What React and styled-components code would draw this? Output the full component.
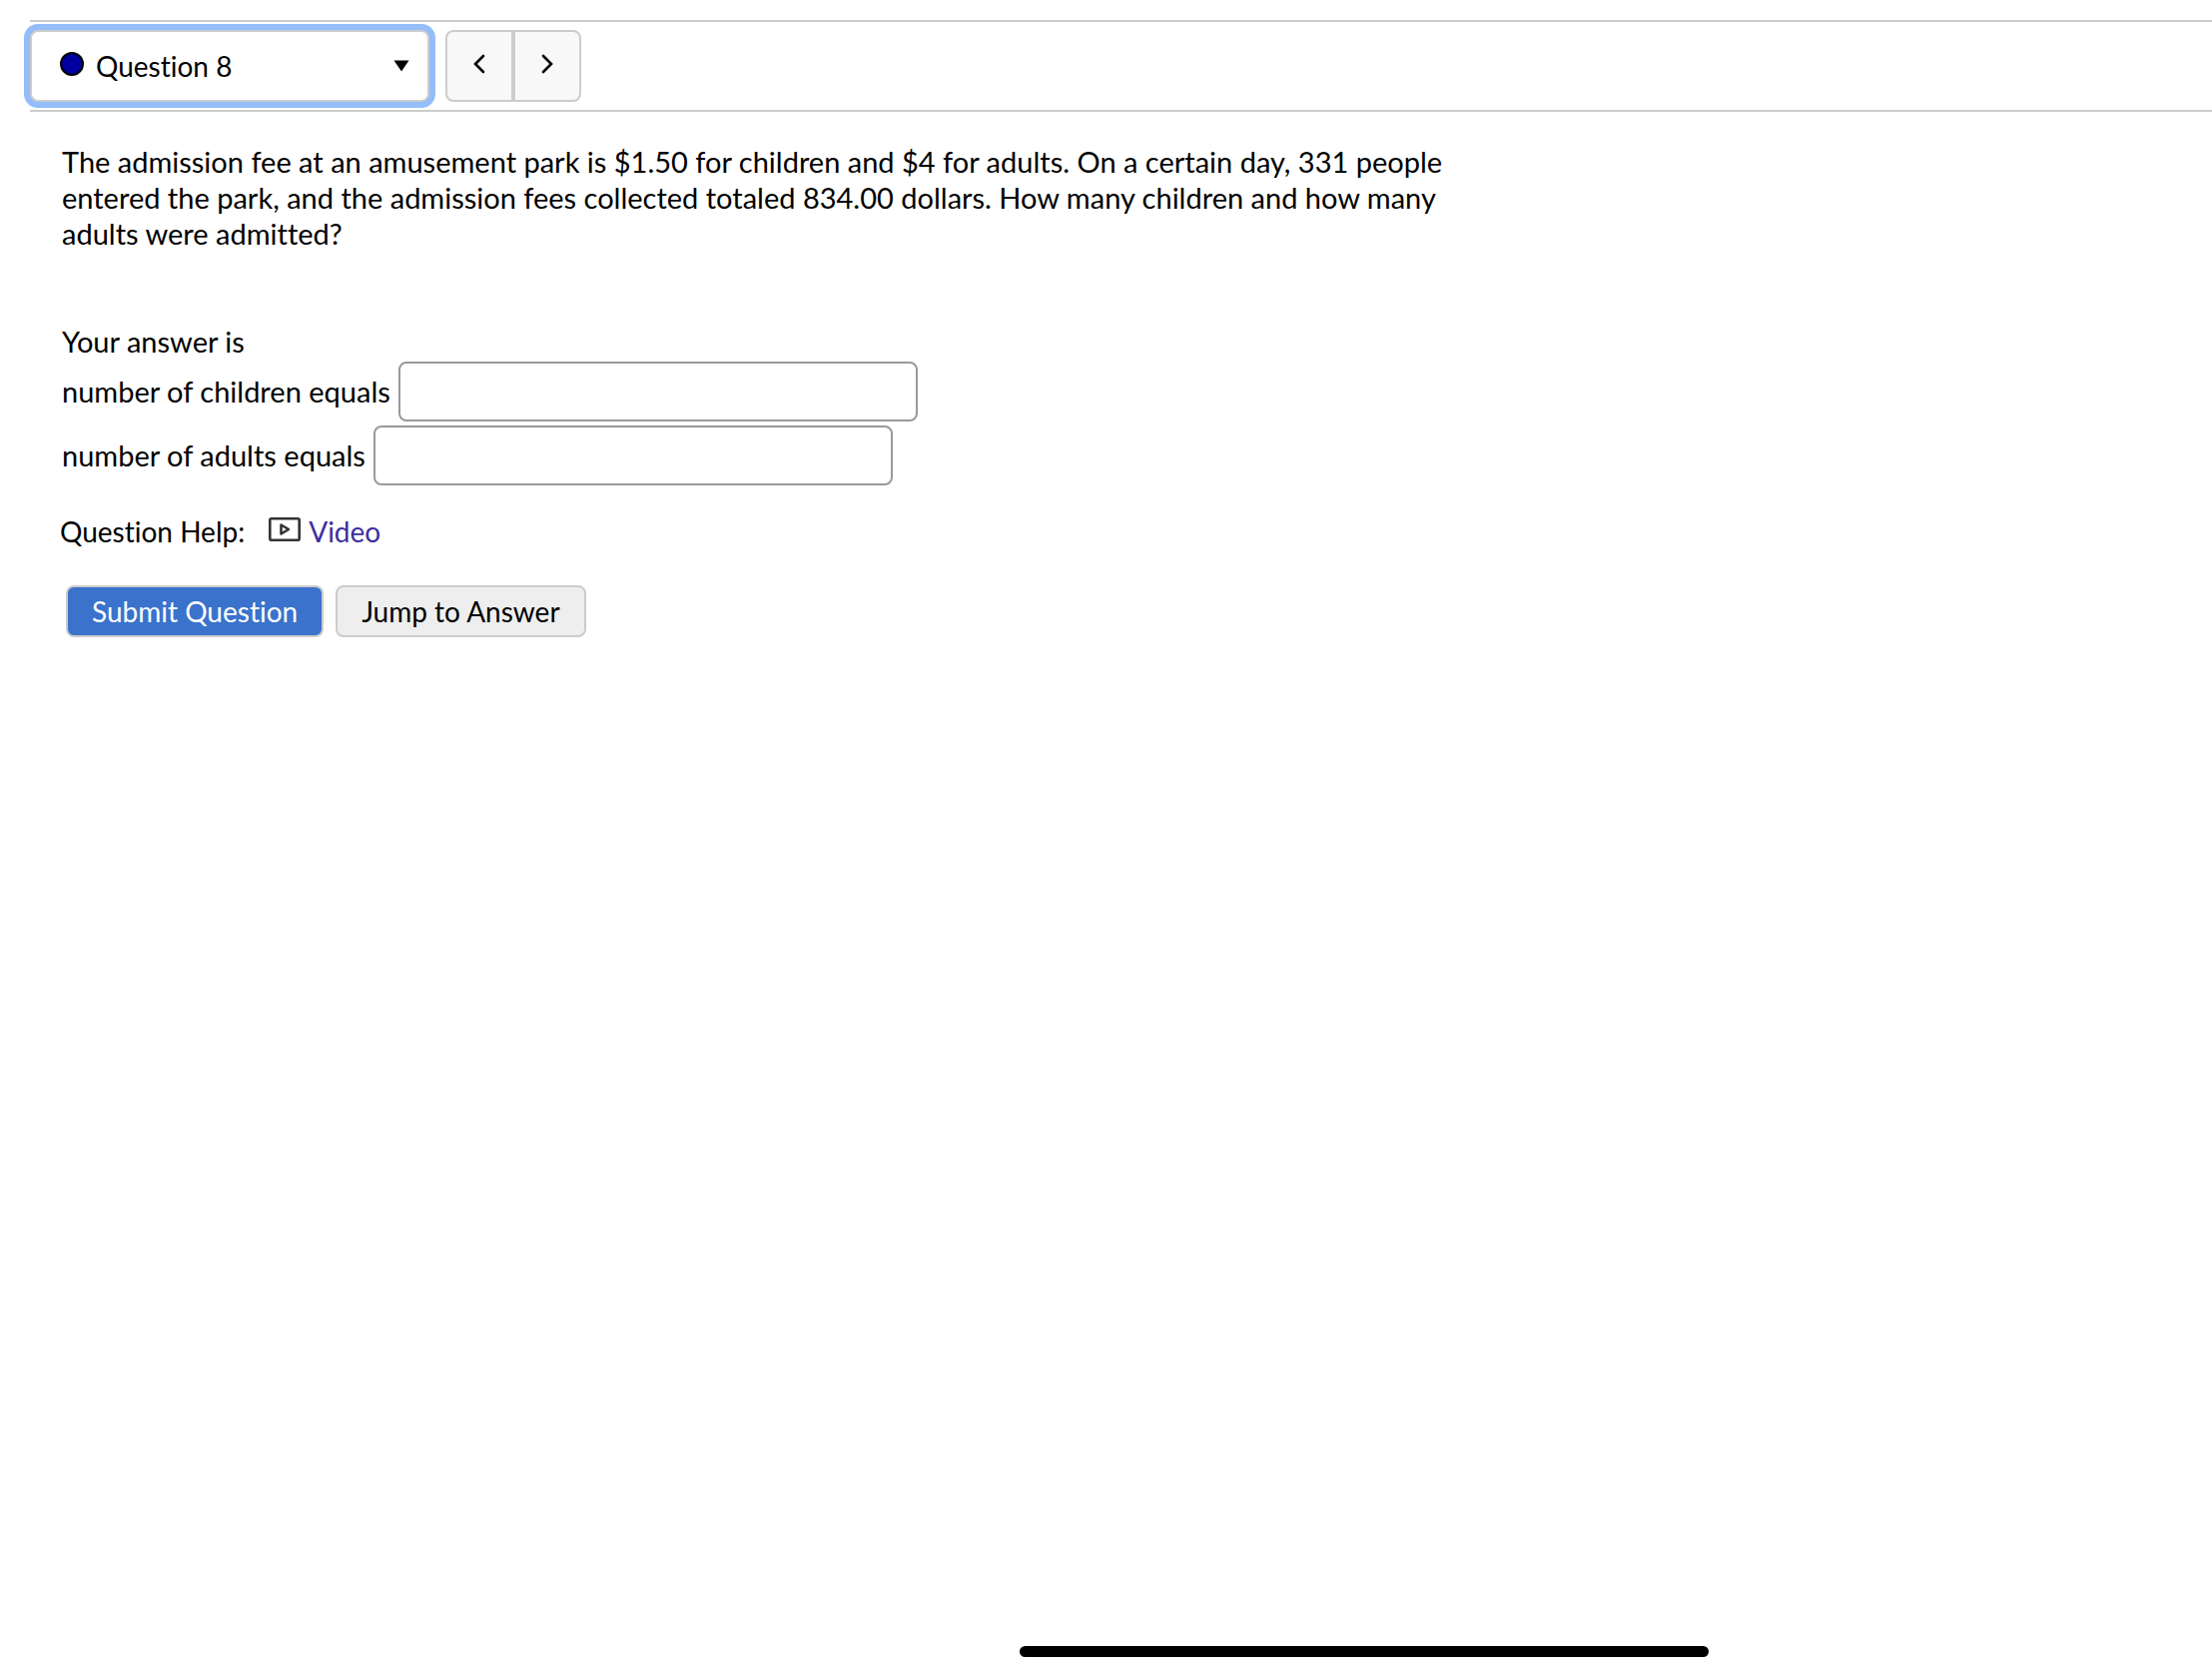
import React from "react";
import styled, { createGlobalStyle } from "styled-components";

const GlobalStyle = createGlobalStyle`
  *, *::before, *::after { box-sizing: border-box; }
  body {
    margin: 0;
    background: #fff;
    color: #000;
    font: 28px/36px Lato, "Open Sans", sans-serif;
    font-variant-ligatures: none;
  }
  select, input, button {
    font: inherit;
    font-variant-ligatures: none;
    color: inherit;
    margin: 0;
  }
`;

const Page = styled.div`
  min-height: 100vh;
  padding-top: 20px;
`;

const Toolbar = styled.nav`
  display: flex;
  gap: 16px;
  margin-left: 30px;
  padding: 8px 0;
  border: solid #ccc;
  border-width: 2px 0;
`;

const Picker = styled.div`
  position: relative;
  width: 400px;
`;

const PickerSelect = styled.select`
  appearance: none;
  display: block;
  width: 100%;
  height: 72px;
  padding: 0 48px 0 64px;
  border: 2px solid #ccc;
  border-radius: 8px;
  background: #fff;
  box-shadow: 0 0 0 6px #94bdf9;
  outline: none;
`;

const StatusDot = styled.span`
  position: absolute;
  left: 30px;
  top: 22px;
  width: 24px;
  height: 24px;
  border: 2px solid #000;
  border-radius: 50%;
  background: #00009f;
  pointer-events: none;
`;

const Caret = styled.svg`
  position: absolute;
  right: 20px;
  top: 30px;
  width: 16px;
  height: 12px;
  pointer-events: none;
`;

const Pager = styled.div`
  display: flex;
`;

const PagerButton = styled.button`
  display: grid;
  place-items: center;
  width: 68px;
  height: 72px;
  padding: 0 0 4px;
  border: 2px solid #ccc;
  border-radius: ${(p) => (p.$side === "left" ? "8px 0 0 8px" : "0 8px 8px 0")};
  background: #f8f8f8;
`;

const Content = styled.main`
  padding: 32px 60px;
`;

const QuestionBody = styled.section`
  padding-left: 2px;
  font-size: 29px;
`;

const Prompt = styled.p`
  max-width: 1400px;
  margin: 0 0 72px;
`;

const Lead = styled.p`
  margin: 0 0 2px;
`;

const AnswerRow = styled.div`
  display: flex;
  align-items: center;
  gap: 8px;
  margin-bottom: 4px;
`;

const AnswerInput = styled.input`
  width: 520px;
  height: 60px;
  padding: 0 12px;
  border: 2px solid #999;
  border-radius: 8px;
  background: #fff;
`;

const Help = styled.div`
  display: flex;
  align-items: center;
  margin: 28px 0 36px;
`;

const HelpLink = styled.a`
  display: flex;
  align-items: center;
  gap: 8px;
  margin-left: 24px;
  color: #3b2e9e;
  text-decoration: none;
`;

const VideoIcon = styled.svg`
  width: 32px;
  height: 24px;
  margin-bottom: 4px;
`;

const Actions = styled.div`
  display: flex;
  gap: 12px;
  margin-left: 6px;
`;

const ActionButton = styled.button`
  height: 52px;
  padding: 0 24px;
  border: 2px solid #ccc;
  border-radius: 8px;
  background: ${(p) => (p.$primary ? "#3a72cc" : "#eee")};
  color: ${(p) => (p.$primary ? "#fff" : "#000")};
`;

const HomeIndicator = styled.div`
  position: fixed;
  right: 504px;
  bottom: 15px;
  width: 690px;
  height: 11px;
  border-radius: 6px;
  background: #000;
`;

const Chevron = ({ d }) => (
  <svg width="12" height="20" viewBox="0 0 12 20" fill="none" stroke="#000" strokeWidth="2.6" strokeLinecap="round" aria-hidden="true">
    <path d={d} />
  </svg>
);

const answers = [
  { id: "children", label: "number of children equals" },
  { id: "adults", label: "number of adults equals" },
];

export default function App() {
  return (
    <>
      <GlobalStyle />
      <Page>
        <Toolbar>
          <Picker>
            <PickerSelect aria-label="Question">
              <option>Question 8</option>
            </PickerSelect>
            <StatusDot />
            <Caret viewBox="0 0 16 12" aria-hidden="true">
              <path d="M0.5 0.5H15.5L8 11.5Z" />
            </Caret>
          </Picker>
          <Pager>
            <PagerButton $side="left" aria-label="Previous question">
              <Chevron d="M10 2L2 10L10 18" />
            </PagerButton>
            <PagerButton $side="right" aria-label="Next question">
              <Chevron d="M2 2L10 10L2 18" />
            </PagerButton>
          </Pager>
        </Toolbar>
        <Content>
          <QuestionBody>
            <Prompt>
              The admission fee at an amusement park is $1.50 for children and $4 for adults. On a certain day, 331
              people entered the park, and the admission fees collected totaled 834.00 dollars. How many children and
              how many adults were admitted?
            </Prompt>
            <Lead>Your answer is</Lead>
            {answers.map(({ id, label }) => (
              <AnswerRow key={id}>
                <label htmlFor={id}>{label}</label>
                <AnswerInput id={id} type="text" />
              </AnswerRow>
            ))}
          </QuestionBody>
          <Help>
            <span>Question Help:</span>
            <HelpLink href="#video">
              <VideoIcon viewBox="0 0 32 24" fill="none" stroke="#333" strokeWidth="2.6" strokeLinejoin="round" aria-hidden="true">
                <rect x="1.3" y="1.3" width="29.4" height="21.4" rx="1.5" />
                <path d="M12.5 7.5V16.5L20 12Z" />
              </VideoIcon>
              Video
            </HelpLink>
          </Help>
          <Actions>
            <ActionButton $primary type="button">Submit Question</ActionButton>
            <ActionButton type="button">Jump to Answer</ActionButton>
          </Actions>
        </Content>
        <HomeIndicator />
      </Page>
    </>
  );
}
